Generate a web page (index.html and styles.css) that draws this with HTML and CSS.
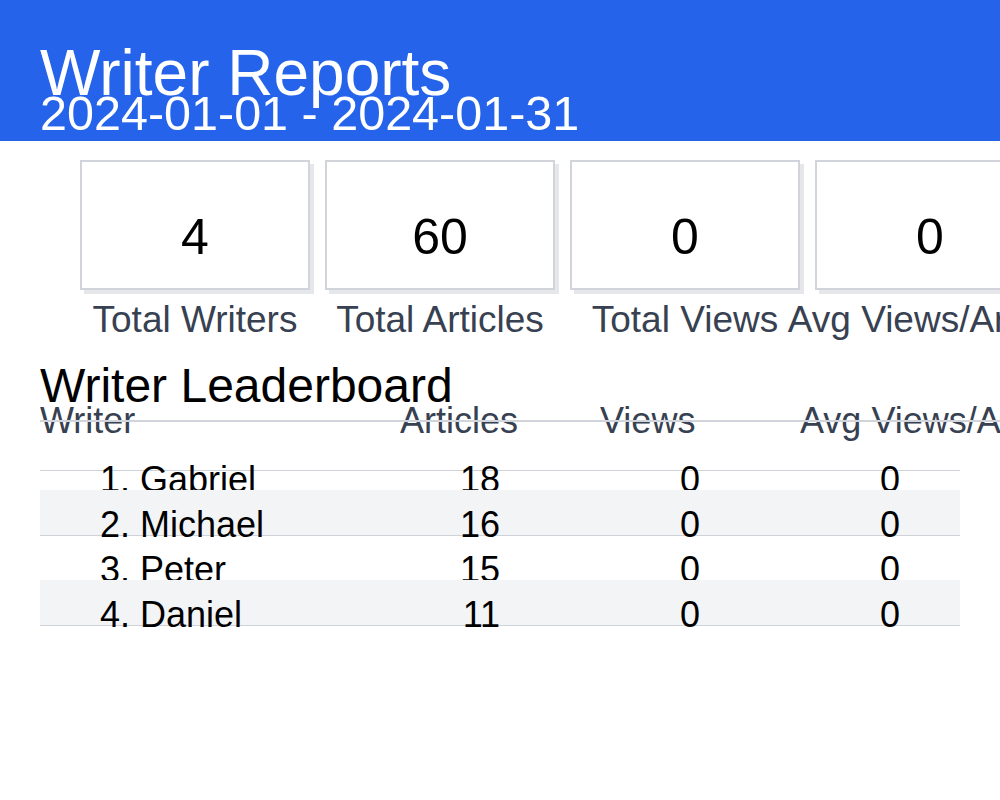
FILE: index.html
```html
<!DOCTYPE html>
<html lang="en">
<head>
<meta charset="utf-8">
<title>Writer Reports</title>
<link rel="stylesheet" href="styles.css">
</head>
<body>
<header class="hero">
  <h1 class="hero-title">Writer Reports</h1>
  <p class="hero-range">2024-01-01 - 2024-01-31</p>
</header>
<main class="content">
  <section class="stats">
    <div class="stat">
      <div class="stat-card"><span class="stat-value">4</span></div>
      <div class="stat-label">Total Writers</div>
    </div>
    <div class="stat">
      <div class="stat-card"><span class="stat-value">60</span></div>
      <div class="stat-label">Total Articles</div>
    </div>
    <div class="stat">
      <div class="stat-card"><span class="stat-value">0</span></div>
      <div class="stat-label">Total Views</div>
    </div>
    <div class="stat">
      <div class="stat-card"><span class="stat-value">0</span></div>
      <div class="stat-label">Avg Views/Article</div>
    </div>
  </section>
  <section class="board">
    <h2 class="board-title">Writer Leaderboard</h2>
    <div class="table">
      <div class="thead">
        <div class="th">Writer</div>
        <div class="th">Articles</div>
        <div class="th">Views</div>
        <div class="th">Avg Views/Article</div>
      </div>
      <div class="tbody">
        <div class="tr">
          <div class="td name">1. Gabriel</div>
          <div class="td num">18</div>
          <div class="td num">0</div>
          <div class="td num">0</div>
        </div>
        <div class="tr">
          <div class="td name">2. Michael</div>
          <div class="td num">16</div>
          <div class="td num">0</div>
          <div class="td num">0</div>
        </div>
        <div class="tr">
          <div class="td name">3. Peter</div>
          <div class="td num">15</div>
          <div class="td num">0</div>
          <div class="td num">0</div>
        </div>
        <div class="tr">
          <div class="td name">4. Daniel</div>
          <div class="td num">11</div>
          <div class="td num">0</div>
          <div class="td num">0</div>
        </div>
      </div>
    </div>
  </section>
</main>
</body>
</html>
```

FILE: styles.css
```css
* {
  box-sizing: border-box;
  margin: 0;
  padding: 0;
}

html,
body {
  background: #ffffff;
}

body {
  font-family: "Liberation Sans", Arial, sans-serif;
  color: #000000;
  overflow-x: hidden;
  min-height: 800px;
}

/* ---------- header ---------- */
.hero {
  background: #2563eb;
  color: #ffffff;
  height: 141px;
  padding: 40px 40px 20px;
}

.hero-title {
  font-size: 64px;
  font-weight: 400;
  line-height: 66px;
  white-space: nowrap;
}

.hero-range {
  font-size: 48.5px;
  line-height: 15px;
  white-space: nowrap;
}

/* ---------- stat cards ---------- */
.stats {
  display: flex;
  gap: 15px;
  padding: 19px 0 0 80px;
}

.stat {
  flex: 0 0 230px;
  min-width: 0;
  display: flex;
  flex-direction: column;
  align-items: center;
}

.stat-card {
  width: 230px;
  height: 130px;
  border: 2px solid #d1d5db;
  box-shadow: 4px 4px 0 #e5e7eb;
  padding-top: 51px;
  text-align: center;
  background: #ffffff;
}

.stat-value {
  display: block;
  font-size: 50px;
  line-height: 48px;
}

.stat-label {
  margin-top: 9px;
  font-size: 37px;
  line-height: 41px;
  color: #374151;
  white-space: nowrap;
}

/* ---------- leaderboard ---------- */
.board {
  margin-top: 28px;
  padding: 0 40px 120px;
}

.board-title {
  font-size: 48px;
  font-weight: 400;
  line-height: 36px;
  white-space: nowrap;
}

.table {
  width: 920px;
}

.thead {
  position: relative;
  display: grid;
  grid-template-columns: 360px 200px 200px 160px;
  height: 67px;
  border-bottom: 1px solid #cfd3d9;
  font-size: 36px;
  line-height: 34px;
  color: #374151;
}

.thead::after {
  content: "";
  position: absolute;
  left: 0;
  right: -120px;
  top: 16px;
  height: 2px;
  background: #d1d5db;
}

.th {
  white-space: nowrap;
}

.tbody {
  margin-top: -26px;
}

.tr {
  position: relative;
  z-index: 0;
  display: grid;
  grid-template-columns: 360px 100px 200px 200px;
  height: 45px;
  font-size: 36px;
  line-height: 70px;
}

.tr:nth-child(even) {
  background: #f3f4f6;
}

.tr:nth-child(even)::after {
  content: "";
  position: absolute;
  z-index: -1;
  left: 0;
  right: 0;
  top: 45px;
  height: 1px;
  background: #cfd3d9;
}

.td {
  white-space: nowrap;
}

.name {
  padding-left: 60px;
}

.num {
  text-align: right;
}
```
